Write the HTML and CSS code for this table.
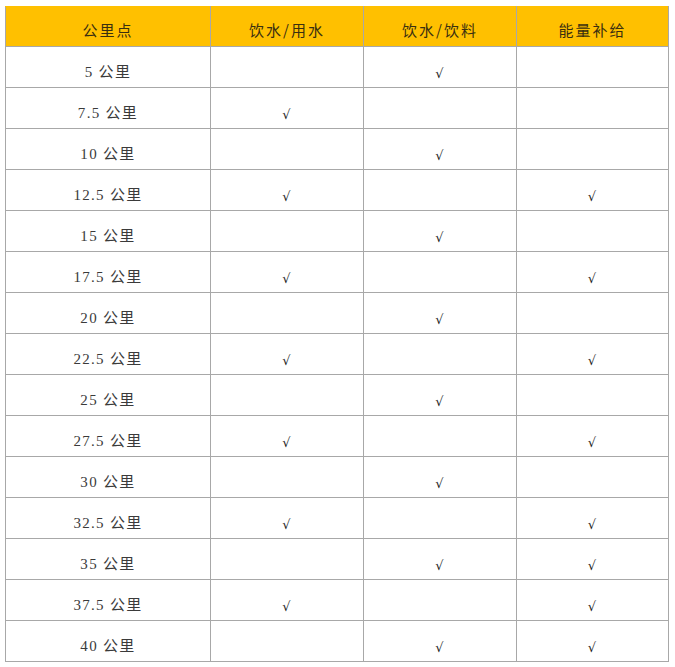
FILE: index.html
```html
<!DOCTYPE html>
<html lang="zh">
<head>
<meta charset="utf-8">
<link rel="stylesheet" href="styles.css">
</head>
<body>
<table class="grid">
  <colgroup>
    <col class="c1"><col class="c2"><col class="c3"><col class="c4">
  </colgroup>
  <thead>
    <tr><th>公里点</th><th>饮水/用水</th><th>饮水/饮料</th><th>能量补给</th></tr>
  </thead>
  <tbody>
    <tr><td>5 公里</td><td></td><td class="ck">√</td><td></td></tr>
    <tr><td>7.5 公里</td><td class="ck">√</td><td></td><td></td></tr>
    <tr><td>10 公里</td><td></td><td class="ck">√</td><td></td></tr>
    <tr><td>12.5 公里</td><td class="ck">√</td><td></td><td class="ck">√</td></tr>
    <tr><td>15 公里</td><td></td><td class="ck">√</td><td></td></tr>
    <tr><td>17.5 公里</td><td class="ck">√</td><td></td><td class="ck">√</td></tr>
    <tr><td>20 公里</td><td></td><td class="ck">√</td><td></td></tr>
    <tr><td>22.5 公里</td><td class="ck">√</td><td></td><td class="ck">√</td></tr>
    <tr><td>25 公里</td><td></td><td class="ck">√</td><td></td></tr>
    <tr><td>27.5 公里</td><td class="ck">√</td><td></td><td class="ck">√</td></tr>
    <tr><td>30 公里</td><td></td><td class="ck">√</td><td></td></tr>
    <tr><td>32.5 公里</td><td class="ck">√</td><td></td><td class="ck">√</td></tr>
    <tr><td>35 公里</td><td></td><td class="ck">√</td><td class="ck">√</td></tr>
    <tr><td>37.5 公里</td><td class="ck">√</td><td></td><td class="ck">√</td></tr>
    <tr><td>40 公里</td><td></td><td class="ck">√</td><td class="ck">√</td></tr>
  </tbody>
</table>
</body>
</html>
```
FILE: styles.css
```css
html, body {
  margin: 0;
  padding: 0;
  background: #ffffff;
}
body {
  padding: 6px 0 0 5px;
}
.grid {
  border-collapse: collapse;
  table-layout: fixed;
  width: 663px;
  font-family: "Liberation Serif", "Noto Sans CJK SC", serif;
  color: #333333;
}
.c1 { width: 205px; }
.c2 { width: 153px; }
.c3 { width: 153px; }
.c4 { width: 152px; }
.grid thead tr { height: 40px; }
.grid tbody tr { height: 41px; }
.grid th,
.grid td {
  border: 1px solid #a8a8a8;
  text-align: center;
  vertical-align: middle;
  padding: 0;
  line-height: 20px;
}
.grid th {
  background: #ffc000;
  font-family: "Noto Sans CJK SC", sans-serif;
  font-weight: normal;
  font-size: 15px;
  letter-spacing: 2px;
  color: #3a2f10;
  border-top-color: #ffc000;
  padding-top: 7px;
}
.grid td {
  font-size: 15px;
  letter-spacing: 1.3px;
  padding-top: 9px;
  color: #3a3a3a;
}
.grid td.ck {
  font-family: "DejaVu Sans", sans-serif;
  font-size: 13px;
  color: #1e1e1e;
  padding-top: 14px;
}
```
